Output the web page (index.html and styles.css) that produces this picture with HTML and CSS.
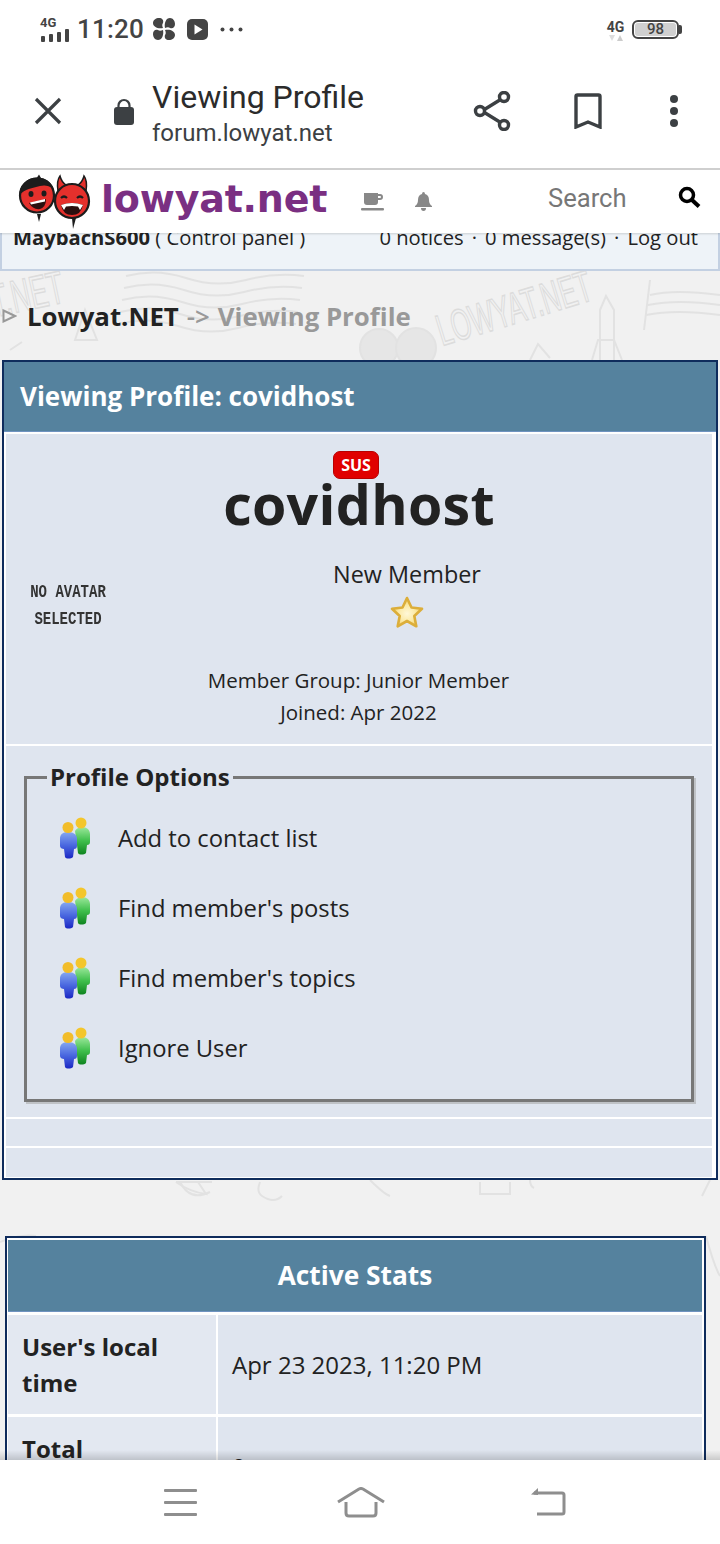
FILE: index.html
```html
<!DOCTYPE html>
<html lang="ms">
<head>
  <meta charset="UTF-8" />
  <title>Viewing Profile</title>
  <link rel="stylesheet" href="styles.css">
</head>
<body>
  <svg class="defs" width="0" height="0">
    <defs>
      <linearGradient id="gBlue" x1="0" y1="0" x2="0" y2="1"><stop offset="0" stop-color="#86a8f0"/><stop offset="0.5" stop-color="#4a68e0"/><stop offset="1" stop-color="#1c28c4"/></linearGradient>
      <linearGradient id="gGreen" x1="0" y1="0" x2="0" y2="1"><stop offset="0" stop-color="#9be89b"/><stop offset="0.5" stop-color="#3fbf4c"/><stop offset="1" stop-color="#0f8420"/></linearGradient>
      <radialGradient id="gStar" cx="0.5" cy="0.55" r="0.5"><stop offset="0" stop-color="#fff8d8"/><stop offset="0.6" stop-color="#fbe9a4"/><stop offset="1" stop-color="#f3cf63"/></radialGradient>
      <symbol id="people" viewBox="0 0 32 42">
        <path d="M24 10C29 10 32 13 32 17V25C32 27 31 28 29 28L28 36C26 38 21 38 20 36L19 28L17 14C18 12 21 10 24 10Z" fill="url(#gGreen)"/>
        <circle cx="23" cy="6" r="5.500" fill="#f4c62c"/>
        <path d="M10 15C16 15 19 18 19 22V29C19 31 18 32 16 32L15 40C13 42 8 42 7 40L6 32C4 32 2 31 2 29V22C2 18 4 15 10 15Z" fill="url(#gBlue)"/>
        <circle cx="10" cy="10.500" r="5.500" fill="#f2bd2a"/>
      </symbol>
    </defs>
  </svg>

  <div class="statusbar">
    <div class="status-left">
      <div class="signal">
        <span class="net">4G</span>
        <svg width="30" height="14" viewBox="0 0 30 14" fill="#444"><rect x="1" y="8" width="4" height="6" rx="1"/><rect x="9" y="6" width="4" height="8" rx="1"/><rect x="17" y="4" width="4" height="10" rx="1"/><rect x="25" y="1" width="4" height="13" rx="1"/></svg>
      </div>
      <span class="time">11:20</span>
      <svg width="24" height="24" viewBox="0 0 24 24" fill="#444"><path d="M11 11C6 12 1 10 1 6c0-3 3-5 6-5 3 0 5 2 4 5-1 1-1 3 0 5zM13 11c-1-5 1-10 5-10 3 0 5 3 5 6 0 3-2 5-5 4-1-1-3-1-5 0zM13 13c5-1 10 1 10 5 0 3-3 5-6 5-3 0-5-2-4-5 1-1 1-3 0-5zM11 13c1 5-1 10-5 10-3 0-5-3-5-6 0-3 2-5 5-4 1 1 3 1 5 0z"/></svg>
      <svg class="play" width="21" height="21" viewBox="0 0 21 21"><rect width="21" height="21" rx="5" fill="#444"/><path d="M7.500 5.500v10l8-5z" fill="#fff"/></svg>
      <svg class="more" width="23" height="5" viewBox="0 0 23 5" fill="#444"><circle cx="2.500" cy="2.500" r="2"/><circle cx="11.500" cy="2.500" r="2"/><circle cx="20.500" cy="2.500" r="2"/></svg>
    </div>
    <div class="status-right">
      <div class="net-right">
        <span class="net">4G</span>
        <svg width="14" height="6" viewBox="0 0 14 6"><path d="M0 0h6L3 6z" fill="#ddd"/><path d="M8 6h6l-3-6z" fill="#ccc"/></svg>
      </div>
      <div class="battery"><span class="battery-level">98</span></div>
    </div>
  </div>

  <div class="toolbar">
    <svg class="tb-close" width="30" height="30" viewBox="0 0 30 30"><path d="M3 3l24 24M27 3L3 27" stroke="#3c4043" stroke-width="3.200" fill="none"/></svg>
    <svg class="tb-lock" width="22" height="28" viewBox="0 0 22 28"><path d="M5.500 12V7.500a5.500 5.500 0 0 1 11 0V12" stroke="#3c4043" stroke-width="2.200" fill="none"/><rect x="1" y="9" width="20" height="18" rx="3" fill="#3c4043"/></svg>
    <div class="tb-title">
      <div class="tb-heading">Viewing Profile</div>
      <div class="tb-url">forum.lowyat.net</div>
    </div>
    <svg class="tb-share" width="38" height="40" viewBox="0 0 38 40" fill="none" stroke="#3c4043" stroke-width="3.400"><path d="M9 20L30 7M9 20l21 13"/><circle cx="7" cy="20" r="4.500" fill="#fff"/><circle cx="31" cy="6" r="4.500" fill="#fff"/><circle cx="31" cy="34" r="4.500" fill="#fff"/></svg>
    <svg class="tb-mark" width="28" height="36" viewBox="0 0 28 36"><path d="M2 34V3.500C2 2.500 2.500 2 3.500 2h21c1 0 1.500.5 1.500 1.500V34l-12-5z" fill="none" stroke="#3c4043" stroke-width="3.400"/></svg>
    <svg class="tb-menu" width="10" height="34" viewBox="0 0 10 34" fill="#3c4043"><circle cx="5" cy="5" r="4"/><circle cx="5" cy="17" r="4"/><circle cx="5" cy="29" r="4"/></svg>
  </div>

  <div class="page">
    <svg class="doodles" width="720" height="1291" viewBox="0 0 720 1291" fill="none" stroke="#e2e2e2" stroke-width="2">
      <text x="-6" y="146" class="wm" textLength="74" lengthAdjust="spacingAndGlyphs" transform="rotate(-12 0 146)">T.NET</text>
      <text x="442" y="176" class="wm wm-big" textLength="160" lengthAdjust="spacingAndGlyphs" transform="rotate(-17 442 176)">LOWYAT.NET</text>
      <path d="M126 106q30-8 60 2t60 2t58-4M124 118q30-8 60 2t60 2t58-4M122 130q30-8 60 2t60 2t58-4M120 142q30-8 60 2t60 2t58-4M118 154q30-8 60 2t60 2t58-4"/>
      <path d="M650 125q25-6 70 0M648 135q30-6 72 0M646 145q30-6 74 0M650 110l-6 50"/>
      <circle cx="379" cy="178" r="19" fill="#e6e6e6"/><circle cx="416" cy="178" r="20" fill="#e6e6e6"/>
      <path d="M600 190v-50l6-14 8 14v50M592 190l6-20h16l8 20"/>
      <path d="M75 170l10-30 12 30zM530 190l8-16 12 14M10 180l12-8"/>
      <path d="M176 1012q14 10 30 12l-8-12M176 1012h36M370 1010q14 14 20 16M480 1012v12h30v-12M710 1010l-8 16M260 1012q-4 10 2 14q12 8 20 0M0 1072q20-8 36-6"/>
      <path d="M180 1012q10 20 30 10M530 1010q0 6 4 8M706 1066q8 30 14 40"/>
    </svg>

    <header class="site-header">
      <svg class="logo-faces" width="74" height="56" viewBox="0 0 74 56">
        <path d="M20 40l2 8 2-8z" fill="#1c1c1c"/>
        <circle cx="20" cy="21.500" r="17" fill="#e5302c" stroke="#1c1c1c" stroke-width="2.200"/>
        <path d="M2.500 21C2 12 9 3.500 20 3.500l2-3 2 3.500c7 1 11 6 13 11-6-4-10-4-14-3-8 2-15 3-20.500 9z" fill="#1c1c1c"/>
        <ellipse cx="14" cy="20" rx="2.500" ry="3" fill="#1c1c1c"/><ellipse cx="27" cy="19.500" rx="2.500" ry="3" fill="#1c1c1c"/>
        <path d="M12 29l17-4q0 8-6 10-7 1-11-6z" fill="#2a1010"/><path d="M13 28.500l15-3.500v2.500l-14 3z" fill="#fff"/>
        <path d="M41 17C40 11 40 6 43 2c1 4 3 7 6 9zM69 17c1-6 1-11-2-15-1 4-3 7-6 9z" fill="#e5302c" stroke="#1c1c1c" stroke-width="1.500"/>
        <path d="M55 44l1 11 3-11z" fill="#1c1c1c"/>
        <circle cx="55" cy="27" r="17" fill="#e5302c" stroke="#1c1c1c" stroke-width="2.200"/>
        <path d="M44 24q3-3 6 0M60 24q3-3 6 0" stroke="#1c1c1c" stroke-width="2.200" fill="none"/>
        <path d="M44 31q11-4 22 0q-2 10-11 10t-11-10z" fill="#2a1010"/>
        <path d="M44 31q11-4 22 0l-3 5-2-3.500q-6-1-12 0L47 36z" fill="#fff"/>
      </svg>
      <span class="logo-text">lowyat.net</span>
      <svg class="hd-cup" width="23" height="20" viewBox="0 0 23 20" fill="#888"><path d="M3 1h14v9q0 3-3 3H6q-3 0-3-3z"/><path d="M17 2h2q3 0 3 3t-3 3h-2V6h2q1 0 1-1t-1-1h-2z"/><rect y="16" width="23" height="2.500" rx="1"/></svg>
      <svg class="hd-bell" width="17" height="19" viewBox="0 0 17 19" fill="#888"><path d="M8.500 0q1.500 0 1.500 2 4 1 4 6 0 4 3 6v1H0v-1q3-2 3-6 0-5 4-6 0-2 1.500-2z"/><path d="M6 16h5q0 3-2.500 3T6 16z"/></svg>
      <span class="hd-search">Search</span>
      <svg class="hd-glass" width="23" height="22" viewBox="0 0 23 22" fill="none" stroke="#000" stroke-width="3.500"><circle cx="9" cy="9" r="6.500"/><path d="M14 14l7 6.500" stroke-width="4"/></svg>
    </header>

    <div class="userbar">
      <span><b>MaybachS600</b> ( Control panel )</span>
      <span class="user-links">
        <span>0 notices</span><span>·</span><span>0 message(s)</span><span>·</span><span>Log out</span>
      </span>
    </div>

    <div class="crumbs">
      <svg class="crumb-arrow" width="15" height="14" viewBox="0 0 15 14"><path d="M1.500 1.500L13 7 1.500 12.500z" fill="#f1f1f1" stroke="#999" stroke-width="2"/></svg>
      <span class="crumb-home">Lowyat.NET</span>
      <span class="crumb-sep">-&gt;</span>
      <span class="crumb-cur">Viewing Profile</span>
    </div>

    <section class="panel">
      <h2 class="panel-title">Viewing Profile: covidhost</h2>
      <div class="profile-row">
        <div class="name-wrap">
          <span class="sus">SUS</span>
          <div class="username">covidhost</div>
        </div>
        <div class="rank-row">
          <div class="avatar"><span>NO AVATAR</span><span>SELECTED</span></div>
          <div class="rank">
            <div>New Member</div>
            <svg class="star" width="34" height="32" viewBox="0 0 34 32"><path d="M17 2l4.500 9.500 10.500 1.300-7.700 7.200 2 10.300L17 25l-9.300 5.300 2-10.300L2 12.800l10.500-1.300z" fill="url(#gStar)" stroke="#dcae3a" stroke-width="2.600" stroke-linejoin="round"/></svg>
          </div>
        </div>
        <div class="member-info">Member Group: Junior Member<br>Joined: Apr 2022</div>
      </div>

      <div class="options-row">
        <fieldset class="options">
          <legend>Profile Options</legend>
          <div class="opt"><svg class="people" width="32" height="42"><use href="#people"/></svg>Add to contact list</div>
          <div class="opt"><svg class="people" width="32" height="42"><use href="#people"/></svg>Find member's posts</div>
          <div class="opt"><svg class="people" width="32" height="42"><use href="#people"/></svg>Find member's topics</div>
          <div class="opt"><svg class="people" width="32" height="42"><use href="#people"/></svg>Ignore User</div>
        </fieldset>
      </div>
      <div class="empty-row"></div>
      <div class="empty-row last"></div>
    </section>

    <section class="stats">
      <h2 class="stats-title">Active Stats</h2>
      <div class="stats-row">
        <div class="stats-key">User's local time</div>
        <div class="stats-val">Apr 23 2023, 11:20 PM</div>
      </div>
      <div class="stats-row">
        <div class="stats-key">Total Cumulative</div>
        <div class="stats-val">0</div>
      </div>
    </section>

    <div class="page-fade"></div>
  </div>

  <div class="navbar">
    <svg width="34" height="27" viewBox="0 0 34 27" fill="#8e8e8e"><rect y="0" width="33" height="3" rx="1"/><rect y="12" width="33" height="3" rx="1"/><rect y="24" width="33" height="3" rx="1"/></svg>
    <svg class="nav-home" width="48" height="31" viewBox="0 0 48 31" fill="none" stroke="#8e8e8e" stroke-width="3"><path d="M1 15L22 2q2-1 4 0l21 13"/><path d="M9 15v11q0 3 3 3h24q3 0 3-3V15"/></svg>
    <svg width="35" height="28" viewBox="0 0 35 28" fill="none"><path d="M3 5h28q2 0 2 2v17q0 2-2 2H6" stroke="#8e8e8e" stroke-width="3"/><path d="M0 6.500L7 0v7z" fill="#8e8e8e"/></svg>
  </div>
</body>
</html>
```

FILE: styles.css
```css
* {
  box-sizing: border-box;
}
html, body {
  margin: 0;
  height: 1544px;
  overflow: hidden;
  background: #fff;
}
body {
  width: 720px;
  font-family: "Open Sans", sans-serif;
  color: #222;
  display: flex;
  flex-direction: column;
}
.defs {
  position: absolute;
}

/* phone status bar */
.statusbar {
  height: 60px;
  padding: 14px 41px 0 40px;
  display: flex;
  justify-content: space-between;
  font-family: Roboto, sans-serif;
  color: #444;
}
.status-left {
  display: flex;
  align-items: center;
  height: 30px;
}
.signal {
  display: flex;
  flex-direction: column;
  width: 30px;
  margin-right: 7px;
}
.net {
  font-size: 13px;
  line-height: 11px;
  font-weight: 700;
}
.time {
  font-size: 26px;
  font-weight: 500;
  margin-right: 8px;
  letter-spacing: 0.2px;
}
.play {
  margin-left: 11px;
}
.more {
  margin-left: 12px;
}
.status-right {
  display: flex;
  align-items: center;
  height: 30px;
  gap: 8px;
}
.net-right {
  display: flex;
  flex-direction: column;
  align-items: center;
  width: 17px;
  gap: 2px;
  padding-top: 4px;
}
.net-right .net {
  font-size: 14px;
}
.battery {
  width: 47px;
  height: 19px;
  border: 2px solid #444;
  border-radius: 6px;
  padding: 1px;
  position: relative;
}
.battery::after {
  content: '';
  position: absolute;
  right: -5px;
  top: 3px;
  width: 3px;
  height: 9px;
  background: #444;
  border-radius: 0 2px 2px 0;
}
.battery-level {
  display: block;
  height: 100%;
  background: #d0d0d0;
  border-radius: 3px;
  font-size: 15px;
  line-height: 13px;
  font-weight: 500;
  text-align: center;
}

/* browser toolbar */
.toolbar {
  height: 110px;
  border-bottom: 2px solid #cfcfcf;
  display: flex;
  align-items: center;
  font-family: Roboto, sans-serif;
  padding-bottom: 6px;
}
.tb-close {
  margin-left: 33px;
}
.tb-lock {
  margin-left: 50px;
  margin-top: 2px;
}
.tb-title {
  margin-left: 17px;
  width: 322px;
  margin-top: 4px;
}
.tb-heading {
  font-size: 32px;
  line-height: 40px;
  color: #2b2b2b;
}
.tb-url {
  font-size: 24px;
  line-height: 32px;
  color: #3c4043;
}
.tb-share {
  margin-left: -1px;
}
.tb-mark {
  margin-left: 63px;
}
.tb-menu {
  margin-left: 67px;
}

/* web page */
.page {
  height: 1290px;
  position: relative;
  overflow: hidden;
  background: #f1f1f1;
}
.doodles {
  position: absolute;
  left: 0;
  top: 0;
}
.wm {
  font-family: "Liberation Sans", sans-serif;
  font-size: 46px;
  fill: none;
  stroke: #dcdcdc;
  stroke-width: 1.500;
}
.wm-big {
  font-size: 44px;
}
.site-header {
  height: 63px;
  background: #fff;
  position: relative;
  z-index: 2;
  display: flex;
  align-items: center;
  box-shadow: 0 1px 2px rgba(0, 0, 0, 0.15);
}
.logo-faces {
  margin-left: 17px;
  flex: none;
}
.logo-text {
  margin-left: 10px;
  width: 230px;
  font-family: "DejaVu Sans", sans-serif;
  font-weight: 700;
  font-size: 38px;
  letter-spacing: -0.2px;
  color: #7a2f82;
  margin-top: -6px;
  white-space: nowrap;
}
.hd-cup {
  margin-left: 30px;
}
.hd-bell {
  margin-left: 31px;
}
.hd-search {
  margin-left: 116px;
  margin-top: -8px;
  width: 79px;
  font-family: Roboto, sans-serif;
  font-size: 25.6px;
  color: #777;
}
.hd-glass {
  margin-left: 51px;
  margin-top: -10px;
}
.userbar {
  margin-top: -24px;
  height: 62px;
  padding: 15px 20px 0 11px;
  background: #eef3f8;
  border: 2px solid #c3d0e2;
  border-top: none;
  position: relative;
  z-index: 1;
  display: flex;
  justify-content: space-between;
  font-size: 20.2px;
  line-height: 27px;
}
.user-links {
  display: flex;
  gap: 8px;
}
.crumbs {
  height: 89px;
  position: relative;
  display: flex;
  align-items: center;
  padding-left: 2px;
  font-size: 25.8px;
  font-weight: 700;
  color: #999;
}
.crumb-arrow {
  margin-right: 10px;
}
.crumb-home {
  color: #222;
  margin-right: 8px;
}
.crumb-sep {
  margin-right: 8px;
  font-weight: 600;
}

/* profile panel */
.panel {
  margin: 0 2px;
  height: 820px;
  position: relative;
  border: 2px solid #0f2c5c;
  background: #fff;
  padding: 0 2px 2px;
}
.panel-title {
  margin: 0 -2px;
  height: 70px;
  padding-left: 16px;
  background: #55829e;
  border-bottom: 1px solid #6f93c0;
  color: #fff;
  font-size: 26px;
  line-height: 68px;
  font-weight: 700;
}
.profile-row {
  height: 312px;
  background: #dfe5ef;
  border-top: 2px solid #fff;
  margin-right: 2px;
  padding-right: 1px;
}
.name-wrap {
  text-align: center;
  padding-top: 16px;
  position: relative;
  margin-left: 1px;
}
.sus {
  position: absolute;
  left: 326px;
  top: 17px;
  width: 46px;
  height: 28px;
  background: #e00000;
  border: 1px solid #b80000;
  border-radius: 7px;
  color: #fff;
  font-size: 16px;
  line-height: 26px;
  font-weight: 700;
}
.username {
  font-size: 55.5px;
  line-height: 76px;
  font-weight: 700;
  letter-spacing: 0.3px;
  padding-top: 17px;
  margin-top: -1px;
}
.rank-row {
  display: flex;
  margin-top: 16px;
}
.avatar {
  width: 100px;
  padding-top: 21px;
  padding-left: 24px;
  display: flex;
  flex-direction: column;
  align-items: center;
  flex: none;
  font-family: "Liberation Mono", monospace;
  font-size: 14px;
  font-weight: 700;
  line-height: 27px;
  color: #333;
  white-space: nowrap;
}
.avatar span {
  transform: scaleY(1.3);
}
.rank {
  flex: 1;
  text-align: center;
  font-size: 23.4px;
  line-height: 32px;
  margin-left: -3px;
}
.star {
  display: block;
  margin: 6px auto 0;
}
.member-info {
  margin-top: 31px;
  text-align: center;
  font-size: 20.5px;
  line-height: 32px;
}
.options-row {
  height: 373px;
  background: #dfe5ef;
  border-top: 2px solid #fff;
  margin-right: 2px;
  padding: 17px 18px 0 18px;
}
.options {
  margin: 0;
  padding: 12px 0 0 31px;
  height: 339px;
  border: 3px solid #777;
  box-shadow: 2px 2px 0 #bfc2c6;
}
.options legend {
  font-size: 24px;
  font-weight: 700;
  line-height: 28px;
  padding: 0 3px;
  margin-left: -11px;
}
.opt {
  height: 70px;
  display: flex;
  align-items: center;
  font-size: 23.8px;
}
.people {
  margin-right: 28px;
  flex: none;
  filter: blur(0.4px);
}
.empty-row {
  height: 29px;
  background: #dfe5ef;
  border-top: 2px solid #fff;
  margin-right: 2px;
}
.empty-row.last {
  height: 31px;
}

/* active stats */
.stats {
  margin: 56px 14px 0 5px;
  position: relative;
  border: 2px solid #0f2c5c;
  border-bottom: none;
  background: #fff;
  padding: 2px 2px 0 1px;
}
.stats-title {
  margin: 0;
  height: 72px;
  background: #55829e;
  border-bottom: 1px solid #6f93c0;
  color: #fff;
  text-align: center;
  font-size: 26.3px;
  line-height: 70px;
  font-weight: 700;
}
.stats-row {
  display: grid;
  grid-template-columns: 208px 1fr;
  column-gap: 2px;
  margin-top: 3px;
  height: 99px;
}
.stats-key {
  background: #e3e8f1;
  padding: 14px 30px 0 14px;
  font-size: 24px;
  line-height: 36px;
  font-weight: 700;
}
.stats-val {
  background: #dfe5ef;
  padding: 32px 14px 0;
  font-size: 24px;
  line-height: 36px;
}
.page-fade {
  position: absolute;
  left: 0;
  right: 0;
  bottom: 0;
  height: 10px;
  z-index: 3;
  background: linear-gradient(rgba(0, 0, 0, 0), rgba(0, 0, 0, 0.16));
}

/* android nav */
.navbar {
  height: 84px;
  background: #fff;
  position: relative;
  display: flex;
  align-items: center;
  padding: 0 154px 0 164px;
  justify-content: space-between;
}
.nav-home {
  margin-right: 8px;
}
```
